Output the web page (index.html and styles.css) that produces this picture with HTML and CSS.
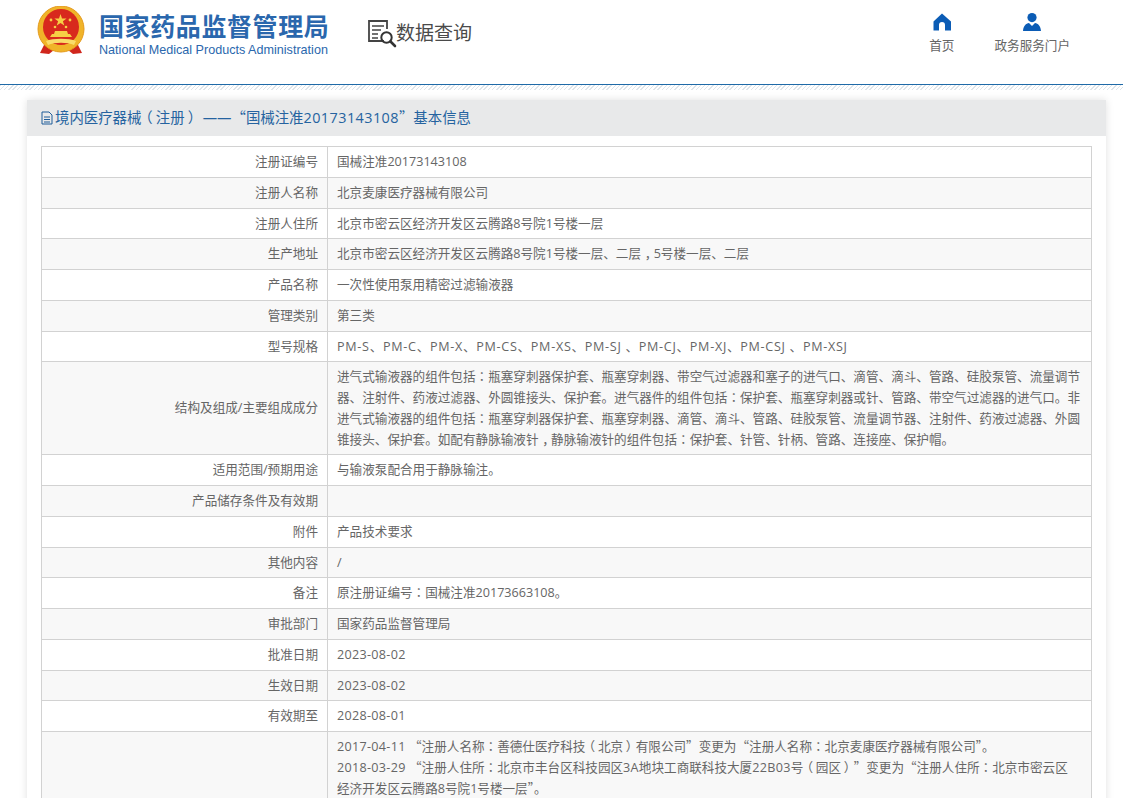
FILE: index.html
```html
<!DOCTYPE html>
<html lang="zh-CN">
<head>
<meta charset="utf-8">
<title>数据查询</title>
<link rel="stylesheet" href="styles.css">
</head>
<body>
<header class="site-header">
  <div class="brand">
    <svg class="emblem" viewBox="0 0 48 50" width="48" height="50" aria-hidden="true">
      <path d="M7 39 L3 47 L12 48 L17 44 L31 44 L36 48 L45 47 L41 39 Z" fill="#d0261c"/>
      <circle cx="24" cy="23" r="23" fill="#f0b429"/>
      <circle cx="24" cy="23" r="23" fill="none" stroke="#e59a1c" stroke-width="1"/>
      <circle cx="24" cy="21" r="18" fill="#d8291d"/>
      <polygon points="23.5,8 25,12.4 29.6,12.4 25.9,15.2 27.3,19.6 23.5,16.9 19.7,19.6 21.1,15.2 17.4,12.4 22,12.4" fill="#f6cf45"/>
      <circle cx="14" cy="14" r="1.4" fill="#f6cf45"/>
      <circle cx="33" cy="14" r="1.4" fill="#f6cf45"/>
      <circle cx="18" cy="21" r="1.3" fill="#f6cf45"/>
      <circle cx="29" cy="21" r="1.3" fill="#f6cf45"/>
      <path d="M15 28 H33 L35 31 H13 Z M18 25 H30 L31 28 H17 Z" fill="#f6cf45"/>
      <path d="M9 35 C16 32 32 32 39 35 L37 39 C30 36 18 36 11 39 Z" fill="#f9dc6a"/>
      <path d="M11 40 C16 37 20 38 24 41 C28 38 32 37 37 40 L33 44 H15 Z" fill="#f0b429"/>
    </svg>
    <div class="brand-text">
      <div class="brand-name">国家药品监督管理局</div>
      <div class="brand-en">National Medical Products Administration</div>
    </div>
    <div class="query">
      <svg class="query-icon" viewBox="0 0 30 30" width="30" height="30" aria-hidden="true">
        <path d="M17 22 H2 V2 H20 V10" fill="none" stroke="#444" stroke-width="1.8"/>
        <path d="M5 7 H17 M5 11 H14 M5 15 H11 M5 19 H11" stroke="#444" stroke-width="1.6" fill="none"/>
        <circle cx="19.5" cy="18.5" r="5.2" fill="none" stroke="#333" stroke-width="2"/>
        <path d="M23.5 22.5 L28 27" stroke="#333" stroke-width="2.6" stroke-linecap="round"/>
      </svg>
      <span class="query-text">数据查询</span>
    </div>
  </div>
  <nav class="nav">
    <a class="nav-item nav-home">
      <svg viewBox="0 0 18 18" width="18" height="18" aria-hidden="true"><path d="M9 0.5 L18 8.5 V17.5 H12 V12 A3 3 0 0 0 6 12 V17.5 H0.5 V8.5 Z" fill="#0b5cb5"/></svg>
      <span>首页</span>
    </a>
    <a class="nav-item nav-portal">
      <svg viewBox="0 0 18 18" width="18" height="18" aria-hidden="true"><circle cx="9" cy="4.6" r="4.6" fill="#0b5cb5"/><path d="M0 18 C0.5 12.5 3 10.5 6 10 L9 13 L12 10 C15 10.5 17.5 12.5 18 18 Z" fill="#0b5cb5"/></svg>
      <span>政务服务门户</span>
    </a>
  </nav>
</header>
<div class="rule"></div>
<main class="panel">
  <h2 class="panel-head">
    <svg viewBox="0 0 12 14" width="12" height="14" aria-hidden="true"><path d="M1 1 H8 L11 4 V13 H1 Z M3 6 H9 M3 8.5 H9 M3 11 H9" fill="none" stroke="#1f5c99" stroke-width="1"/></svg>
    <span class="panel-title">境内医疗器械<span class="p po">（</span>注册<span class="p pc">）</span> ——<span class="q">“</span>国械注准<span class="reg-no">20173143108</span><span class="q">”</span>基本信息</span>
  </h2>
  <div class="panel-body">
    <table class="info">
      <colgroup><col class="col-label"><col></colgroup>
      <tbody>
        <tr><th>注册证编号</th><td>国械注准20173143108</td></tr>
        <tr><th>注册人名称</th><td>北京麦康医疗器械有限公司</td></tr>
        <tr><th>注册人住所</th><td>北京市密云区经济开发区云腾路8号院1号楼一层</td></tr>
        <tr><th>生产地址</th><td>北京市密云区经济开发区云腾路8号院1号楼一层、二层<span class="q cm">，</span>5号楼一层、二层</td></tr>
        <tr><th>产品名称</th><td>一次性使用泵用精密过滤输液器</td></tr>
        <tr><th>管理类别</th><td>第三类</td></tr>
        <tr><th>型号规格</th><td class="spec">PM-S、PM-C、PM-X、PM-CS、PM-XS、PM-SJ 、PM-CJ、PM-XJ、PM-CSJ 、PM-XSJ</td></tr>
        <tr><th>结构及组成/主要组成成分</th><td>进气式输液器的组件包括<span class="p">：</span>瓶塞穿刺器保护套、瓶塞穿刺器、带空气过滤器和塞子的进气口、滴管、滴斗、管路、硅胶泵管、流量调节器、注射件、药液过滤器、外圆锥接头、保护套。进气器件的组件包括<span class="p">：</span>保护套、瓶塞穿刺器或针、管路、带空气过滤器的进气口。非进气式输液器的组件包括<span class="p">：</span>瓶塞穿刺器保护套、瓶塞穿刺器、滴管、滴斗、管路、硅胶泵管、流量调节器、注射件、药液过滤器、外圆锥接头、保护套。如配有静脉输液针<span class="q cm">，</span>静脉输液针的组件包括<span class="p">：</span>保护套、针管、针柄、管路、连接座、保护帽。</td></tr>
        <tr><th>适用范围/预期用途</th><td>与输液泵配合用于静脉输注。</td></tr>
        <tr><th>产品储存条件及有效期</th><td></td></tr>
        <tr><th>附件</th><td>产品技术要求</td></tr>
        <tr><th>其他内容</th><td>/</td></tr>
        <tr><th>备注</th><td>原注册证编号<span class="p">：</span>国械注准20173663108。</td></tr>
        <tr><th>审批部门</th><td>国家药品监督管理局</td></tr>
        <tr><th>批准日期</th><td class="date">2023-08-02</td></tr>
        <tr><th>生效日期</th><td class="date">2023-08-02</td></tr>
        <tr><th>有效期至</th><td class="date">2028-08-01</td></tr>
        <tr><th></th><td><span class="date">2017-04-11</span> <span class="q">“</span>注册人名称<span class="p">：</span>善德仕医疗科技<span class="p po">（</span>北京<span class="p pc">）</span>有限公司<span class="q">”</span>变更为<span class="q">“</span>注册人名称<span class="p">：</span>北京麦康医疗器械有限公司<span class="q">”</span>。<br><span class="date">2018-03-29</span> <span class="q">“</span>注册人住所<span class="p">：</span>北京市丰台区科技园区<span class="date">3A</span>地块工商联科技大厦<span class="date">22B03</span>号<span class="p po">（</span>园区<span class="p pc">）</span><span class="q">”</span>变更为<span class="q">“</span>注册人住所<span class="p">：</span>北京市密云区<br>经济开发区云腾路8号院1号楼一层<span class="q">”</span>。</td></tr>
      </tbody>
    </table>
  </div>
</main>
</body>
</html>
```
FILE: styles.css
```css
* { box-sizing: border-box; }
html, body { margin: 0; padding: 0; background: #fff; }
body { font-family: "Open Sans", "Noto Sans CJK SC", sans-serif; font-size: 12.6px; color: #666; }

.p { font-family: "Noto Sans CJK TC", sans-serif; font-feature-settings: "locl" 0; line-height: 0; }
.q { font-family: "Noto Sans CJK SC", sans-serif; line-height: 0; }
.po, .pc, .cm { display: inline-block; }
.po { transform: translateX(-0.22em); }
.pc { transform: translateX(0.22em); }
.cm { transform: translateX(0.3em); }

.site-header { height: 84px; display: flex; justify-content: space-between; padding: 5px 53px 0 37px; }
.brand { display: flex; align-items: flex-start; }
.emblem { margin-top: 1px; }
.brand-text { margin-left: 14px; width: 240px; }
.brand-name { font-family: "Noto Sans CJK SC", sans-serif; font-weight: 700; font-size: 25px; line-height: 30px; margin-top: 5px; letter-spacing: 0.6px; color: #2a67ad; white-space: nowrap; }
.brand-en { font-family: "Liberation Sans", sans-serif; font-size: 12.6px; line-height: 16px; margin-top: 2px; color: #2a67ad; white-space: nowrap; }
.query { display: flex; align-items: flex-start; margin-left: 28px; margin-top: 14px; }
.query-text { font-family: "Noto Sans CJK SC", sans-serif; font-size: 19px; line-height: 26px; color: #4a4a4a; margin-left: -1px; }

.nav { display: flex; gap: 40px; padding-top: 8px; }
.nav-item { display: flex; flex-direction: column; align-items: center; gap: 5px; line-height: 20px; color: #666; }
.nav-item svg { display: block; }

.rule { height: 6px; border-top: 1px solid #1f6aa8; background: repeating-linear-gradient(135deg, #dfe5ea 0 1px, #fff 1px 3px); margin-bottom: 10px; }

.panel { margin: 0 17px 0 27px; box-shadow: 0 0 8px rgba(0,0,0,0.12); background: #fff; }
.panel-head { margin: 0; height: 36px; background: #e8e9ea; display: flex; align-items: center; gap: 2px; padding: 0 14px; font-size: 14.4px; font-weight: 400; color: #2563a0; }
.panel-title { line-height: 20px; }
.reg-no { letter-spacing: 0.45px; }
.panel-body { padding: 10px 14px; }

.info { width: 100%; border-collapse: collapse; table-layout: fixed; border: 1px solid #ccc; }
.col-label { width: 286px; }
.info th, .info td { border: 1px solid #d2d2d2; padding: 5px 8px 4px 9px; line-height: 20.75px; font-weight: 400; text-align: left; vertical-align: middle; word-break: break-all; }
.info th { text-align: right; padding-right: 9px; }
.info tr:nth-child(even) { background: #f8f8f8; }
.spec { letter-spacing: 0.7px; }
.date { letter-spacing: 0.3px; }
```
